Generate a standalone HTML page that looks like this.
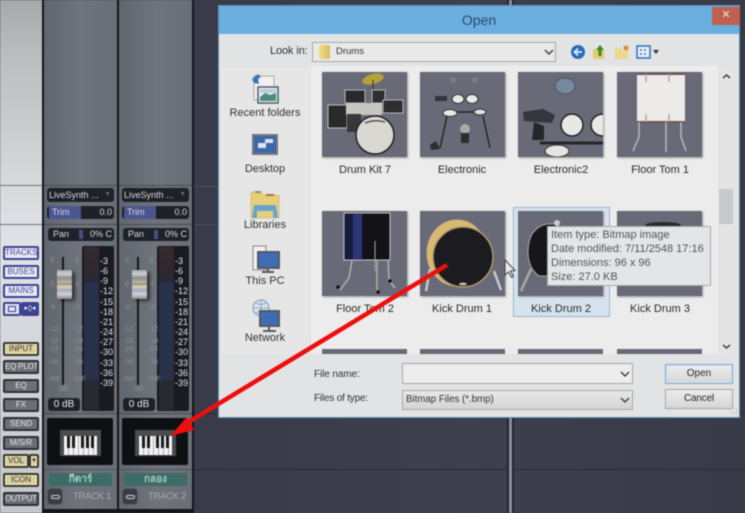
<!DOCTYPE html>
<html><head><meta charset="utf-8"><style>
*{box-sizing:border-box}
html,body{margin:0;padding:0}
body{width:745px;height:513px;overflow:hidden;position:relative;background:#3b3d4b;font-family:"Liberation Sans","Noto Sans CJK SC",sans-serif}
div{position:absolute}
#w{left:0;top:0;width:745px;height:513px;filter:blur(.45px)}
.t{white-space:nowrap;line-height:1}
.lb{left:3px;width:36px;height:14px;border-radius:2px;font-size:8px;line-height:10px;text-align:center;white-space:nowrap;overflow:hidden}
.bl{background:#e8e9f6;border:2px solid #3c4490;color:#3c4490}
.yl{background:#d8cfa4;border:2px solid #3a3a30;color:#3a3720;box-shadow:inset 0 0 0 1px #efe6b8}
.gr{background:#6c7076;border:2px solid #2d3035;color:#e4e6e8}
.strip{top:0;width:73px;height:509px;background:linear-gradient(90deg,#62666e,#6f737b 50%,#6a6e76)}
.box{background:#1e2128;border-radius:3px;color:#d8dade;font-size:9px}
.trim{background:linear-gradient(90deg,#1e2128 2px,#4b5590 2px,#4b5590 34px,#1e2128 34px)}
.sc{font-size:9px;color:#e2e4e8;left:56px;line-height:10px;width:14px}
.fs{font-size:7px;color:#8a8e94;line-height:8px}
.lab{font-size:11px;color:#2a2a2a;text-align:center;width:110px;line-height:14px}
.thumb{width:85px;height:85px;background:#686a77;box-shadow:1px 1px 2px #999;overflow:hidden}
.side{font-size:11px;color:#333;text-align:center;width:88px;left:221px;line-height:14px}
.cb{background:linear-gradient(#e8e8e8,#d4d4d4);border:1px solid #a8a8a8}
.btn{left:665px;width:68px;height:20px;background:linear-gradient(#ececec,#d6d6d6);border:1px solid #a5a5a5;font-size:10px;text-align:center;line-height:18px;color:#2a2a2a}
svg{position:absolute;overflow:visible}
</style></head><body><div id="w">

<!-- workspace background -->
<div style="left:194px;top:0;width:551px;height:513px;background:linear-gradient(90deg,#393b4a,#3e404f 50%,#383a48)"></div>
<div style="left:194px;top:186px;width:25px;height:1px;background:#50525f"></div>
<div style="left:194px;top:224px;width:25px;height:1px;background:#50525f"></div>
<div style="left:194px;top:413px;width:551px;height:1px;background:#2f303c"></div>
<div style="left:194px;top:469px;width:551px;height:1px;background:#282933"></div>
<div style="left:507px;top:0;width:7px;height:513px;background:#23242c"></div>
<div style="left:509px;top:0;width:3px;height:513px;background:#8d8f9b"></div>

<!-- left panel -->
<div style="left:0;top:0;width:42px;height:513px;background:linear-gradient(#a6a8ac 0,#b9bbbf 50px,#d6d8dc 180px,#e2e3e8 250px,#d6d8dd 330px,#c3c5c8 513px)"></div>
<div style="left:0;top:185px;width:42px;height:1px;background:#70737a"></div>
<div style="left:0;top:224px;width:42px;height:1px;background:#70737a"></div>
<div style="left:42px;top:0;width:152px;height:513px;background:#14161b"></div>

<div class="lb bl" style="top:246px">TRACKS</div>
<div class="lb bl" style="top:265px">BUSES</div>
<div class="lb bl" style="top:284px">MAINS</div>
<div class="lb bl" style="top:302px;width:18px;background:#dfe0f2"></div>
<div class="lb" style="top:302px;left:21px;width:18px;background:#3c4490;border:2px solid #3c4490;color:#fff;font-size:7px;line-height:10px">▸▯◂</div>
<div style="left:8px;top:306px;width:8px;height:6px;border:1px solid #3c4490"></div>
<div class="lb yl" style="top:342px">INPUT</div>
<div class="lb gr" style="top:360px;letter-spacing:-.2px">EQ PLOT</div>
<div class="lb gr" style="top:379px">EQ</div>
<div class="lb gr" style="top:398px">FX</div>
<div class="lb gr" style="top:417px">SEND</div>
<div class="lb gr" style="top:436px">M/S/R</div>
<div class="lb yl" style="top:454px;width:26px">VOL</div>
<div class="lb yl" style="top:454px;left:29px;width:10px;font-size:6px">▼</div>
<div class="lb yl" style="top:473px">ICON</div>
<div class="lb gr" style="top:492px;letter-spacing:-.2px">OUTPUT</div>

<!-- strip 1 -->
<div class="strip" style="left:44px">
  <div style="left:0;top:185px;width:73px;height:1px;background:#494c53"></div>
  <div style="left:0;top:224px;width:73px;height:1px;background:#494c53"></div>
  <div class="box t" style="left:3px;top:188px;width:67px;height:14px;line-height:14px;padding-left:2px">LiveSynth ...<span style="position:absolute;right:3px;top:0;color:#666;font-size:7px">▼</span></div>
  <div class="box t trim" style="left:3px;top:206px;width:67px;height:13px;line-height:13px;padding-left:5px">Trim<span style="position:absolute;right:2px;top:0">0.0</span></div>
  <div class="box t" style="left:4px;top:228px;width:66px;height:13px;line-height:13px;padding-left:5px">Pan<span style="position:absolute;right:2px;top:0">0% C</span></div>
  <div style="left:35px;top:230px;width:4px;height:9px;background:#474f80"></div>
  <div style="left:38px;top:246px;width:32px;height:165px;background:#191b21;border-radius:2px"></div>
  <div style="left:40px;top:247px;width:15px;height:36px;background:linear-gradient(#362a2e,#2e282f 70%,#262a3c)"></div>
  <div style="left:40px;top:283px;width:15px;height:97px;background:repeating-linear-gradient(#2d3550 0,#2d3550 1px,#262c44 1px,#262c44 2px)"></div>
  <div style="left:40px;top:380px;width:15px;height:30px;background:#272a30"></div>
  <div class="sc t" style="top:256px">-3</div><div class="sc t" style="top:266px">-6</div><div class="sc t" style="top:276px">-9</div><div class="sc t" style="top:286px">-12</div><div class="sc t" style="top:297px">-15</div><div class="sc t" style="top:307px">-18</div><div class="sc t" style="top:317px">-21</div><div class="sc t" style="top:327px">-24</div><div class="sc t" style="top:337px">-27</div><div class="sc t" style="top:347px">-30</div><div class="sc t" style="top:358px">-33</div><div class="sc t" style="top:368px">-36</div><div class="sc t" style="top:378px">-39</div>
  <div class="fs t" style="left:6px;top:257px">6</div><div class="fs t" style="left:31px;top:257px">6</div>
  <div class="fs t" style="left:6px;top:281px">0</div><div class="fs t" style="left:31px;top:281px">0</div>
  <div class="fs t" style="left:5px;top:304px">-6</div><div class="fs t" style="left:30px;top:304px">-6</div>
  <div class="fs t" style="left:4px;top:326px">-12</div><div class="fs t" style="left:29px;top:326px">-12</div>
  <div class="fs t" style="left:4px;top:338px">-18</div><div class="fs t" style="left:29px;top:338px">-18</div>
  <div class="fs t" style="left:4px;top:346px">-24</div><div class="fs t" style="left:29px;top:346px">-24</div>
  <div class="fs t" style="left:4px;top:359px">-36</div><div class="fs t" style="left:29px;top:359px">-36</div>
  <div class="fs t" style="left:3px;top:376px">-INF</div><div class="fs t" style="left:28px;top:376px">-INF</div>
  <div class="fs t" style="left:15px;top:385px;font-size:8px">dB</div>
  <div style="left:18px;top:257px;width:2px;height:128px;background:#16181c"></div>
  <div style="left:13px;top:270px;width:15px;height:29px;border-radius:1px;box-shadow:3px 2px 3px rgba(0,0,0,.55);background:linear-gradient(#a4a6a6 0,#d0d0cc 4px,#8c8e8e 8px,#b4b4b2 12px,#9c9c98 14px,#c39a3a 14px,#c39a3a 15px,#d4d4d8 16px,#a8aac0 20px,#d2d2d6 24px,#8a8c90 29px)"></div>
  <div class="box t" style="left:4px;top:398px;width:32px;height:13px;line-height:13px;font-size:10px;text-align:center;color:#e8e8ea">0 dB</div>
  <div style="left:0;top:413px;width:73px;height:1px;background:#44474d"></div>
  <div style="left:3px;top:418px;width:66px;height:47px;background:#0e0f12;border-radius:2px"></div>
  <div style="left:16px;top:430px;width:41px;height:26px;background:#494c50"></div>
  <div style="left:20px;top:436px;width:33px;height:19px;background:#f2f2f2"></div>
  <div style="left:20px;top:436px;width:33px;height:19px;background:repeating-linear-gradient(90deg,transparent 0,transparent 4px,#aaa 4px,#aaa 5px)"></div>
  <div style="left:23px;top:436px;width:3px;height:12px;background:#1a1a1a"></div><div style="left:28px;top:436px;width:3px;height:12px;background:#1a1a1a"></div><div style="left:37px;top:436px;width:3px;height:12px;background:#1a1a1a"></div><div style="left:42px;top:436px;width:3px;height:12px;background:#1a1a1a"></div><div style="left:47px;top:436px;width:3px;height:12px;background:#1a1a1a"></div>
  <div style="left:0;top:469px;width:73px;height:1px;background:#53565c"></div>
  <div class="t" style="left:5px;top:473px;width:63px;height:13px;background:#3d6b68;color:#a9c9c6;font:bold 10px/13px 'Liberation Sans','Noto Sans CJK SC',sans-serif;text-align:center">กีตาร์</div>
  <div style="left:4px;top:489px;width:14px;height:15px;background:#3a3d43;border-radius:3px;box-shadow:0 0 1px #111"></div>
  <div style="left:7px;top:495px;width:9px;height:4px;border:1px solid #d0d2d4;border-radius:2px"></div>
  <div class="t" style="left:29px;top:490px;font-size:9.5px;letter-spacing:-.3px;line-height:13px;color:#a6a9ae">TRACK 1</div>
</div>

<!-- strip 2 -->
<div class="strip" style="left:119px">
  <div style="left:0;top:185px;width:73px;height:1px;background:#494c53"></div>
  <div style="left:0;top:224px;width:73px;height:1px;background:#494c53"></div>
  <div class="box t" style="left:3px;top:188px;width:67px;height:14px;line-height:14px;padding-left:2px">LiveSynth ...<span style="position:absolute;right:3px;top:0;color:#666;font-size:7px">▼</span></div>
  <div class="box t trim" style="left:3px;top:206px;width:67px;height:13px;line-height:13px;padding-left:5px">Trim<span style="position:absolute;right:2px;top:0">0.0</span></div>
  <div class="box t" style="left:4px;top:228px;width:66px;height:13px;line-height:13px;padding-left:5px">Pan<span style="position:absolute;right:2px;top:0">0% C</span></div>
  <div style="left:35px;top:230px;width:4px;height:9px;background:#474f80"></div>
  <div style="left:38px;top:246px;width:32px;height:165px;background:#191b21;border-radius:2px"></div>
  <div style="left:40px;top:247px;width:15px;height:36px;background:linear-gradient(#362a2e,#2e282f 70%,#262a3c)"></div>
  <div style="left:40px;top:283px;width:15px;height:97px;background:repeating-linear-gradient(#2d3550 0,#2d3550 1px,#262c44 1px,#262c44 2px)"></div>
  <div style="left:40px;top:380px;width:15px;height:30px;background:#272a30"></div>
  <div class="sc t" style="top:256px">-3</div><div class="sc t" style="top:266px">-6</div><div class="sc t" style="top:276px">-9</div><div class="sc t" style="top:286px">-12</div><div class="sc t" style="top:297px">-15</div><div class="sc t" style="top:307px">-18</div><div class="sc t" style="top:317px">-21</div><div class="sc t" style="top:327px">-24</div><div class="sc t" style="top:337px">-27</div><div class="sc t" style="top:347px">-30</div><div class="sc t" style="top:358px">-33</div><div class="sc t" style="top:368px">-36</div><div class="sc t" style="top:378px">-39</div>
  <div class="fs t" style="left:6px;top:257px">6</div><div class="fs t" style="left:31px;top:257px">6</div>
  <div class="fs t" style="left:6px;top:281px">0</div><div class="fs t" style="left:31px;top:281px">0</div>
  <div class="fs t" style="left:5px;top:304px">-6</div><div class="fs t" style="left:30px;top:304px">-6</div>
  <div class="fs t" style="left:4px;top:326px">-12</div><div class="fs t" style="left:29px;top:326px">-12</div>
  <div class="fs t" style="left:4px;top:338px">-18</div><div class="fs t" style="left:29px;top:338px">-18</div>
  <div class="fs t" style="left:4px;top:346px">-24</div><div class="fs t" style="left:29px;top:346px">-24</div>
  <div class="fs t" style="left:4px;top:359px">-36</div><div class="fs t" style="left:29px;top:359px">-36</div>
  <div class="fs t" style="left:3px;top:376px">-INF</div><div class="fs t" style="left:28px;top:376px">-INF</div>
  <div class="fs t" style="left:15px;top:385px;font-size:8px">dB</div>
  <div style="left:18px;top:257px;width:2px;height:128px;background:#16181c"></div>
  <div style="left:13px;top:270px;width:15px;height:29px;border-radius:1px;box-shadow:3px 2px 3px rgba(0,0,0,.55);background:linear-gradient(#a4a6a6 0,#d0d0cc 4px,#8c8e8e 8px,#b4b4b2 12px,#9c9c98 14px,#c39a3a 14px,#c39a3a 15px,#d4d4d8 16px,#a8aac0 20px,#d2d2d6 24px,#8a8c90 29px)"></div>
  <div class="box t" style="left:4px;top:398px;width:32px;height:13px;line-height:13px;font-size:10px;text-align:center;color:#e8e8ea">0 dB</div>
  <div style="left:0;top:413px;width:73px;height:1px;background:#44474d"></div>
  <div style="left:3px;top:418px;width:66px;height:47px;background:#0e0f12;border-radius:2px"></div>
  <div style="left:16px;top:430px;width:41px;height:26px;background:#494c50"></div>
  <div style="left:20px;top:436px;width:33px;height:19px;background:#f2f2f2"></div>
  <div style="left:20px;top:436px;width:33px;height:19px;background:repeating-linear-gradient(90deg,transparent 0,transparent 4px,#aaa 4px,#aaa 5px)"></div>
  <div style="left:23px;top:436px;width:3px;height:12px;background:#1a1a1a"></div><div style="left:28px;top:436px;width:3px;height:12px;background:#1a1a1a"></div><div style="left:37px;top:436px;width:3px;height:12px;background:#1a1a1a"></div><div style="left:42px;top:436px;width:3px;height:12px;background:#1a1a1a"></div><div style="left:47px;top:436px;width:3px;height:12px;background:#1a1a1a"></div>
  <div style="left:0;top:469px;width:73px;height:1px;background:#53565c"></div>
  <div class="t" style="left:5px;top:473px;width:63px;height:13px;background:#3d6b68;color:#a9c9c6;font:bold 10px/13px 'Liberation Sans','Noto Sans CJK SC',sans-serif;text-align:center">กลอง</div>
  <div style="left:4px;top:489px;width:14px;height:15px;background:#3a3d43;border-radius:3px;box-shadow:0 0 1px #111"></div>
  <div style="left:7px;top:495px;width:9px;height:4px;border:1px solid #d0d2d4;border-radius:2px"></div>
  <div class="t" style="left:29px;top:490px;font-size:9.5px;letter-spacing:-.3px;line-height:13px;color:#a6a9ae">TRACK 2</div>
</div>

<!-- dialog -->
<div style="left:218px;top:5px;width:522px;height:413px;background:#e2e3e4;border:1px solid #5c93b8"></div>
<div style="left:219px;top:6px;width:520px;height:28px;background:#6aaee0"></div>
<div class="t" style="left:219px;top:13px;width:520px;text-align:center;font-size:14px;color:#2c4a68">Open</div>
<div style="left:712px;top:7px;width:28px;height:18px;background:#c0604f"></div>
<div class="t" style="left:712px;top:10px;width:28px;text-align:center;font-size:11px;color:#f4e4e0">✕</div>

<div class="t" style="left:270px;top:46px;font-size:11px;letter-spacing:-.1px;color:#333">Look in:</div>
<div class="cb" style="left:312px;top:42px;width:244px;height:20px;background:#e9e9e9"></div>
<div style="left:319px;top:45px;width:11px;height:14px;background:linear-gradient(90deg,#f2dc8a,#d8bc5c);border-radius:1px"></div>
<div class="t" style="left:336px;top:47px;font-size:9.5px;color:#333">Drums</div>
<svg style="left:0;top:0" width="745" height="513" viewBox="0 0 745 513">
  <path d="M545 50l4 4 4-4" fill="none" stroke="#444" stroke-width="1.500"/>
  <circle cx="578" cy="52" r="7" fill="#2a6cb4"/><path d="M582 52h-7M578 48.500l-3.500 3.500 3.500 3.500" fill="none" stroke="#dbe8f6" stroke-width="1.800"/>
  <path d="M593 49h11v10h-11z" fill="#e3cc6e"/><path d="M600 45l-4 5h2.500v6h3v-6h2.500z" fill="#3b8a2c"/>
  <path d="M615 48h5l1 2h7v9h-13z" fill="#ecd78a"/><circle cx="626" cy="48" r="2.500" fill="#e08a38"/>
  <rect x="637" y="46" width="13" height="12" fill="#e8eef8" stroke="#2f6ebc" stroke-width="1.500"/><path d="M640 50h2M644 50h2M640 54h2M644 54h2" stroke="#4b6fb0" stroke-width="1.500"/>
  <path d="M653 50h6l-3 4z" fill="#333"/>
</svg>

<!-- sidebar -->
<div style="left:221px;top:68px;width:88px;height:286px;background:#e6e6e7"></div>
<svg style="left:0;top:0" width="745" height="513" viewBox="0 0 745 513">
  <rect x="254" y="76" width="20" height="24" fill="#f0f0f0" stroke="#aaa"/>
  <rect x="258" y="87" width="20" height="16" fill="#e8eef4" stroke="#4d5a6c" stroke-width="1.500"/><path d="M260 97l5-4 5 2 6-2v8h-16z" fill="#4f8a76"/><path d="M260 89h16v4h-16z" fill="#b6cde0"/>
  <path d="M258 74l-6 5 2 4 5 1-1-5 3-2z" fill="#3f75b4"/>
  <rect x="253" y="135" width="24" height="19" fill="#3f66a6" stroke="#727880" stroke-width="2"/><path d="M258 143h8v5h-8zM265 139h8v4h-8z" fill="#dbe4f2"/>
  <path d="M251 192h10l2 3h16v23h-28z" fill="#e6cf78" stroke="#c8ae58" stroke-width=".6"/><rect x="255" y="191" width="6" height="2" fill="#6caa4c"/><rect x="266" y="194" width="8" height="2" fill="#b46c4c"/><path d="M254 205h22l2 13h-5v-7h-16v7h-5z" fill="#68a4cf"/>
  <rect x="253" y="246" width="13" height="24" fill="#f0f0f0" stroke="#888"/>
  <rect x="258" y="252" width="21" height="16" fill="#3f6cb4" stroke="#555b63" stroke-width="2"/><path d="M268 268v3M262 272h12" stroke="#555b63" stroke-width="2"/>
  <circle cx="261" cy="308" r="8" fill="#d8e4f0" stroke="#7c9ab8"/><path d="M253 308h16M261 300v16M256 303q5 3 10 0M256 313q5-3 10 0" stroke="#7c9ab8" fill="none" stroke-width=".8"/>
  <rect x="260" y="311" width="19" height="15" fill="#3f6cb4" stroke="#555b63" stroke-width="2"/><path d="M269 326v4M263 331h13" stroke="#555b63" stroke-width="2"/>
</svg>
<div class="side t" style="top:106px">Recent folders</div>
<div class="side t" style="top:162px">Desktop</div>
<div class="side t" style="top:218px">Libraries</div>
<div class="side t" style="top:274px">This PC</div>
<div class="side t" style="top:331px">Network</div>

<!-- list -->
<div style="left:311px;top:66px;width:407px;height:288px;background:#ececec"></div>
<div style="left:718px;top:66px;width:17px;height:288px;background:#e4e4e5"></div>
<div style="left:719px;top:189px;width:14px;height:35px;background:#c8c9cb"></div>
<svg style="left:0;top:0" width="745" height="513" viewBox="0 0 745 513"><path d="M723 78l3.500-3 3.500 3M723 345l3.500 3 3.500-3" fill="none" stroke="#444" stroke-width="1.500"/></svg>

<div style="left:513px;top:207px;width:97px;height:110px;background:#d6e3ee;border:1px solid #9cb6cd"></div>

<!-- thumbs row 1 -->
<div class="thumb" style="left:322px;top:72px"><svg width="85" height="85" viewBox="0 0 85 85">
  <ellipse cx="51" cy="7" rx="11" ry="5" transform="rotate(-15 51 7)" fill="#b5a238"/><path d="M51 8v12" stroke="#333"/>
  <rect x="23" y="18" width="20" height="13" fill="#2a2a2c" stroke="#b8b8b8"/><rect x="50" y="18" width="13" height="13" fill="#2e2e32" stroke="#b8b8b8"/>
  <rect x="6" y="33" width="19" height="23" fill="#2a2a2c" stroke="#c0c0c0"/><rect x="24" y="31" width="36" height="12" fill="#c8c6c0"/>
  <rect x="25" y="42" width="14" height="18" fill="#38383c"/>
  <rect x="61" y="28" width="20" height="13" fill="#2e2e32" stroke="#b8b8b8"/>
  <circle cx="53" cy="63" r="19" fill="#dad8d2" stroke="#222" stroke-width="1.500"/><path d="M43 51q10-4 20-1" stroke="#555" stroke-width="1.500" fill="none"/>
</svg></div>
<div class="thumb" style="left:420px;top:72px"><svg width="85" height="85" viewBox="0 0 85 85">
  <circle cx="33" cy="8" r="3" fill="#7a7c88"/><circle cx="55" cy="8" r="3" fill="#7a7c88"/>
  <path d="M24 40h42M27 44l-7 32M63 44l7 32" stroke="#25282c" stroke-width="1.500" fill="none"/>
  <ellipse cx="38" cy="27" rx="6" ry="4.500" fill="#e8e8e6" stroke="#333"/><ellipse cx="52" cy="27" rx="6" ry="4.500" fill="#e8e8e6" stroke="#333"/>
  <ellipse cx="30" cy="41" rx="7" ry="3.500" fill="#e8e8e6" stroke="#333"/><ellipse cx="60" cy="40" rx="6" ry="3" fill="#e0e0de" stroke="#333"/>
  <rect x="15" y="24" width="12" height="5" fill="#33363a"/><circle cx="45" cy="57" r="5" fill="#a8aaae"/><path d="M41 61h8v10h-8z" fill="#2c2e32"/><path d="M10 73l6-4 4 8-9 1z" fill="#2c2e32"/>
</svg></div>
<div class="thumb" style="left:518px;top:72px"><svg width="85" height="85" viewBox="0 0 85 85">
  <ellipse cx="47" cy="14" rx="10" ry="8" fill="#76889c" stroke="#50555c"/>
  <path d="M5 40l20-3 12 6-3 8-28-2z" fill="#33363c"/><path d="M22 71h63" stroke="#24262a" stroke-width="3"/><path d="M16 50l10 4v14h-12z" fill="#25272b"/>
  <ellipse cx="54" cy="53" rx="11" ry="11" fill="#e8e8e6" stroke="#222" stroke-width="1.500"/><ellipse cx="85" cy="53" rx="12" ry="11" fill="#e8e8e6" stroke="#222" stroke-width="1.500"/>
  <ellipse cx="39" cy="79" rx="12" ry="6" fill="#e4e4e2" stroke="#333"/>
</svg></div>
<div class="thumb" style="left:617px;top:72px"><svg width="85" height="85" viewBox="0 0 85 85">
  <path d="M20 2h48v48H20z" fill="#eeeae8"/><path d="M20 2h48M20 50h48" stroke="#6e5658" stroke-width="2"/><path d="M29 2v8M29 42v8M52 2v8M52 42v8" stroke="#aaa" stroke-width="1.500"/>
  <path d="M22 50v15l-6 14M49 50v30M64 50v15l5 14" fill="none" stroke="#b8b8b8" stroke-width="1.500"/>
</svg></div>

<div class="lab t" style="left:310px;top:163px">Drum Kit 7</div>
<div class="lab t" style="left:407px;top:163px">Electronic</div>
<div class="lab t" style="left:506px;top:163px">Electronic2</div>
<div class="lab t" style="left:605px;top:163px">Floor Tom 1</div>

<!-- thumbs row 2 -->
<div class="thumb" style="left:322px;top:211px"><svg width="85" height="85" viewBox="0 0 85 85">
  <rect x="22" y="2" width="46" height="47" fill="#121218" stroke="#c8c8c8"/><rect x="31" y="3" width="9" height="45" fill="#2a3878"/><rect x="23" y="3" width="8" height="45" fill="#181c3c"/>
  <path d="M30 49l-3 18-9 12M55 49v33M66 49l1 20 6 8" fill="none" stroke="#b0b0b0" stroke-width="1.500"/><path d="M53 30v30" stroke="#aaa"/>
  <circle cx="56" cy="81" r="1.800" fill="#111"/><circle cx="16" cy="76" r="1.800" fill="#111"/><circle cx="68" cy="70" r="1.800" fill="#111"/>
</svg></div>
<div class="thumb" style="left:420px;top:211px"><svg width="85" height="85" viewBox="0 0 85 85">
  <ellipse cx="37" cy="42" rx="30" ry="33" fill="#d9b871" stroke="#c9b07c"/>
  <circle cx="43" cy="46" r="30" fill="#1c1c20" stroke="#b09868" stroke-width="1.500"/>
  <ellipse cx="43" cy="73" rx="4" ry="1.500" fill="#bbb"/><path d="M10 58L6 80M74 60l7 19" stroke="#c8c8c8" stroke-width="2.500" fill="none"/>
</svg></div>
<div class="thumb" style="left:518px;top:211px"><svg width="85" height="85" viewBox="0 0 85 85">
  <path d="M29 13q-19 4-19 28 0 16 11 24l19 0v-52z" fill="#17171b" stroke="#aaa"/><circle cx="39" cy="12" r="3" fill="#ccc"/><path d="M13 58L3 80" stroke="#aaa" stroke-width="2.500"/>
</svg></div>
<div class="thumb" style="left:617px;top:211px"><svg width="85" height="85" viewBox="0 0 85 85"><ellipse cx="46" cy="14" rx="18" ry="3" fill="#2c2c30"/></svg></div>

<div class="lab t" style="left:310px;top:302px">Floor Tom 2</div>
<div class="lab t" style="left:407px;top:302px">Kick Drum 1</div>
<div class="lab t" style="left:506px;top:302px">Kick Drum 2</div>
<div class="lab t" style="left:605px;top:302px">Kick Drum 3</div>

<!-- row 3 -->
<div style="left:322px;top:349px;width:85px;height:5px;background:#686a77"></div>
<div style="left:420px;top:349px;width:85px;height:5px;background:#686a77"></div>
<div style="left:518px;top:349px;width:85px;height:5px;background:#686a77"></div>
<div style="left:617px;top:349px;width:85px;height:5px;background:#686a77"></div>

<!-- tooltip -->
<div style="left:547px;top:226px;width:164px;height:60px;background:#e4e5e6;border:1px solid #a6a8aa"></div>
<div class="t" style="left:551px;top:228px;font-size:11px;line-height:14px;color:#555">Item type: Bitmap image<br>Date modified: 7/11/2548 17:16<br>Dimensions: 96 x 96<br>Size: 27.0 KB</div>

<!-- cursor -->
<svg style="left:0;top:0" width="745" height="513" viewBox="0 0 745 513"><path d="M505 260v15l3.500-3 3 5.500 2-1-3-5.500 4.500-.5z" fill="#e8e8e8" stroke="#444"/></svg>

<!-- bottom form -->
<div class="t" style="left:314px;top:370px;font-size:10px;letter-spacing:-.1px;color:#333">File name:</div>
<div class="t" style="left:314px;top:394px;font-size:10px;letter-spacing:-.2px;color:#333">Files of type:</div>
<div style="left:402px;top:363px;width:231px;height:21px;background:#ededed;border:1px solid #a8a8a8"></div>
<div class="cb t" style="left:402px;top:390px;width:231px;height:20px;font-size:9.7px;line-height:18px;padding-left:3px;color:#333">Bitmap Files (*.bmp)</div>
<svg style="left:0;top:0" width="745" height="513" viewBox="0 0 745 513"><path d="M621 372l4 4 4-4M621 398l4 4 4-4" fill="none" stroke="#444" stroke-width="1.500"/><path d="M736 410h1M733 413h1M736 413h1" stroke="#aaa" stroke-width="1.500"/></svg>
<div class="btn t" style="top:364px;border:1px solid #7ea6d6;box-shadow:inset 0 0 0 1px #cfe0f2">Open</div>
<div class="btn t" style="top:389px;letter-spacing:-.2px">Cancel</div>

<!-- arrow -->
<svg style="left:0;top:0" width="745" height="513" viewBox="0 0 745 513">
  <path d="M447 265L182 426" stroke="#f00d0d" stroke-width="4.500" fill="none"/>
  <path d="M170 436L187 417 194 430z" fill="#f00d0d"/>
</svg>
</div></body></html>
